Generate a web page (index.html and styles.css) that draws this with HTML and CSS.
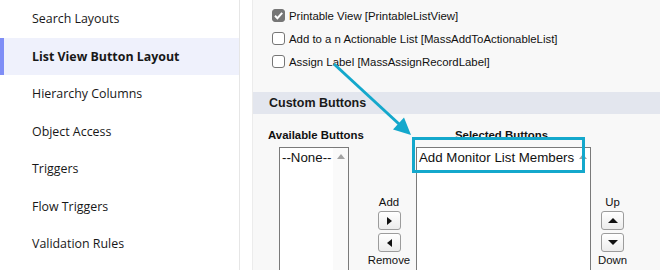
FILE: index.html
```html
<!DOCTYPE html>
<html>
  <head>
    <link rel="stylesheet" href="styles.css">
  </head>
  <body>
    <div class="page">
      <nav class="side">
        <a class="side-item">Search Layouts</a>
        <a class="side-item active">List View Button Layout</a>
        <a class="side-item">Hierarchy Columns</a>
        <a class="side-item">Object Access</a>
        <a class="side-item">Triggers</a>
        <a class="side-item">Flow Triggers</a>
        <a class="side-item">Validation Rules</a>
      </nav>
      <main class="main">
        <section class="panel">
          <ul class="checks">
            <li><span class="cb"></span></li>
            <li>
              <span class="cb checked">
                <svg width="13" height="13" viewBox="0 0 13 13"><path d="M3 6.8l2.4 2.4L10.2 3.8" fill="none" stroke="#fff" stroke-width="2"/></svg>
              </span>
              <span>Printable View [PrintableListView]</span>
            </li>
            <li><span class="cb"></span><span>Add to a n Actionable List [MassAddToActionableList]</span></li>
            <li><span class="cb"></span><span>Assign Label [MassAssignRecordLabel]</span></li>
          </ul>

          <h2 class="section-head">Custom Buttons</h2>

          <div class="duel">
            <div class="col col-avail">
              <div class="col-label">Available Buttons</div>
              <div class="listbox listbox-avail">
                <div class="opt">--None--</div>
                <div class="sbar"><i class="sbar-up"></i></div>
              </div>
            </div>
            <div class="col col-move">
              <div class="move-label">Add</div>
              <button class="move-btn"><i class="tri tri-right"></i></button>
              <button class="move-btn"><i class="tri tri-left"></i></button>
              <div class="move-label">Remove</div>
            </div>
            <div class="col col-sel">
              <div class="col-label centered">Selected Buttons</div>
              <div class="listbox listbox-sel">
                <div class="opt">Add Monitor List Members</div>
                <div class="sbar"><i class="sbar-up"></i></div>
              </div>
            </div>
            <div class="col col-move col-order">
              <div class="move-label">Up</div>
              <button class="move-btn"><i class="tri tri-up"></i></button>
              <button class="move-btn"><i class="tri tri-down"></i></button>
              <div class="move-label">Down</div>
            </div>
          </div>
        </section>
      </main>

      <!-- annotation layer -->
      <svg class="annot" width="660" height="270" viewBox="0 0 660 270">
        <line x1="334" y1="64" x2="399" y2="124" stroke="#14a8cc" stroke-width="3"/>
        <polygon points="411,135 393,129.5 404,117.5" fill="#14a8cc"/>
        <rect x="413.5" y="138.5" width="170" height="33" fill="none" stroke="#14a8cc" stroke-width="3"/>
      </svg>
    </div>
  </body>
</html>
```

FILE: styles.css
```css
body {
  margin: 0;
  background: #fff;
}
.page {
  position: relative;
  display: flex;
  width: 660px;
  height: 270px;
  overflow: hidden;
}

/* left nav */
.side {
  width: 239px;
  flex: none;
  border-right: 1px solid #e6e6e6;
  font-family: "Open Sans", "Noto Sans", sans-serif;
  font-size: 12.4px;
  color: #181818;
}
.side-item {
  display: flex;
  align-items: center;
  height: 37.5px;
  padding-left: 32px;
  box-sizing: border-box;
}
.side-item.active {
  background: #eff1fc;
  border-left: 4px solid #7f8ef6;
  padding-left: 28px;
  font-weight: 700;
}

/* main panel */
.main {
  flex: 1;
  padding-left: 12px;
}
.panel {
  display: flow-root;
  height: 100%;
  background: #f8f8f8;
  border-left: 1px solid #ececec;
  font-family: "Liberation Sans", Arial, sans-serif;
  color: #111;
}
.checks {
  list-style: none;
  margin: -19px 0 0 0;
  padding: 0 0 0 19px;
  font-size: 11.4px;
}
.checks li {
  display: flex;
  align-items: center;
  gap: 4px;
  height: 23px;
}
.cb {
  width: 11px;
  height: 11px;
  border: 1px solid #767676;
  border-radius: 3px;
  background: #fff;
  display: flex;
}
.cb.checked {
  background: #767676;
}
.cb svg {
  margin: -1px;
}
.section-head {
  margin: 19px 0 0 0;
  height: 22px;
  line-height: 22px;
  padding-left: 16px;
  background: #e3e6ee;
  font-size: 12.5px;
  font-weight: 700;
  color: #1a1a1a;
}

/* dueling list boxes */
.duel {
  display: flex;
  margin-top: 14px;
  padding-left: 15px;
}
.col-label {
  font-size: 11.4px;
  font-weight: 700;
  line-height: 14px;
  margin-bottom: 5px;
  white-space: nowrap;
}
.col-label.centered {
  text-align: center;
}
.col-avail {
  width: 98px;
}
.col-sel {
  width: 179px;
}
.listbox {
  display: flex;
  height: 140px;
  background: #fff;
  border: 1px solid #7a7a7a;
  font-size: 13.3px;
}
.listbox-avail {
  width: 68px;
  margin-left: 11px;
}
.listbox-sel {
  width: 173px;
  margin-left: 4px;
}
.opt {
  flex: 1;
  padding: 2px 0 0 2px;
  line-height: 15px;
  white-space: nowrap;
  overflow: hidden;
}
.sbar {
  width: 15px;
  background: #fafafa;
  display: flex;
  justify-content: center;
  padding-top: 6px;
}
.listbox-sel .sbar {
  background: #fff;
}
.sbar-up {
  width: 0;
  height: 0;
  border-left: 4px solid transparent;
  border-right: 4px solid transparent;
  border-bottom: 5px solid #a3a3a3;
}

.col-move {
  width: 46px;
  display: flex;
  flex-direction: column;
  align-items: center;
  padding-top: 67px;
}
.col-order {
  width: 43px;
}
.move-label {
  font-size: 11.4px;
  line-height: 14px;
  color: #111;
}
.move-btn {
  width: 23px;
  height: 19px;
  margin: 2px 0 1px 0;
  padding: 0;
  border: 1px solid #9c9c9c;
  border-radius: 3px;
  background: linear-gradient(#ffffff, #ececec);
  display: flex;
  align-items: center;
  justify-content: center;
}
.tri {
  width: 0;
  height: 0;
}
.tri-right {
  border-top: 4px solid transparent;
  border-bottom: 4px solid transparent;
  border-left: 5px solid #111;
}
.tri-left {
  border-top: 4px solid transparent;
  border-bottom: 4px solid transparent;
  border-right: 5px solid #111;
}
.tri-up {
  border-left: 5px solid transparent;
  border-right: 5px solid transparent;
  border-bottom: 5px solid #111;
}
.tri-down {
  border-left: 5px solid transparent;
  border-right: 5px solid transparent;
  border-top: 5px solid #111;
}

/* annotation overlay */
.annot {
  position: absolute;
  top: 0;
  left: 0;
  pointer-events: none;
}
```
